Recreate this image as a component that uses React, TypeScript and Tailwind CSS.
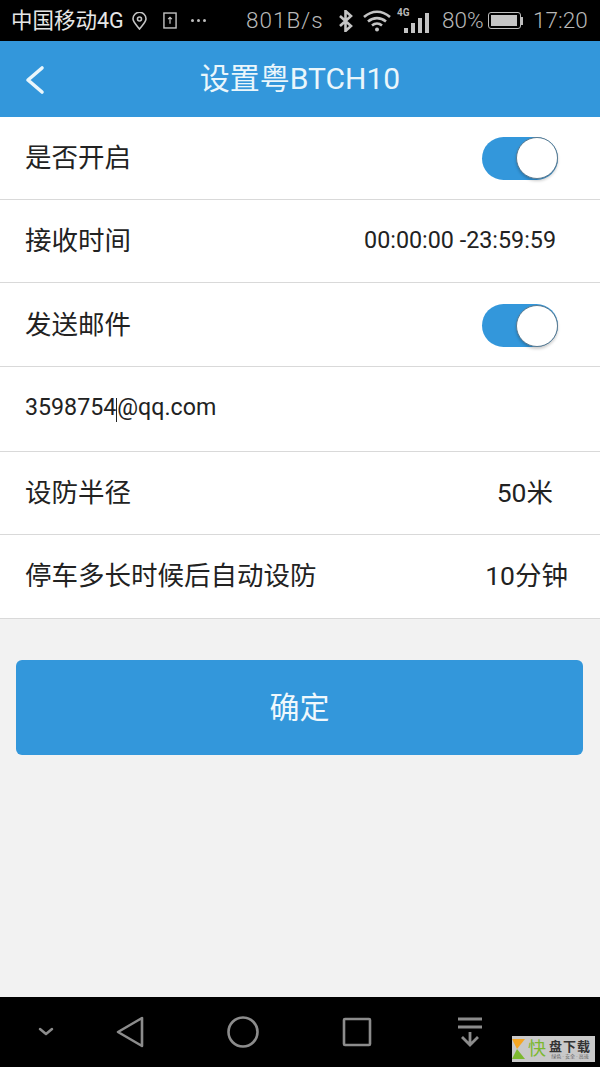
const cjk = "font-['Roboto','Noto_Sans_CJK_SC',sans-serif]";

function Toggle({ className = "" }: { className?: string }) {
  return (
    <div className={`flex h-[43px] w-[76px] items-center justify-end rounded-full bg-[#3397db] ${className}`}>
      <div className="h-[42px] w-[42px] rounded-full border border-[#5a7a90] bg-white shadow-[0_2px_3px_rgba(0,0,0,0.2)]" />
    </div>
  );
}

function Row({ h, children }: { h: string; children: React.ReactNode }) {
  return (
    <div className={`flex items-center justify-between border-b border-[#d9d9d9] bg-white ${h}`}>
      {children}
    </div>
  );
}

function StatusBar() {
  return (
    <div className="flex h-[41px] items-center bg-black text-[#b8b8b8]">
      <span className="ml-[11px] w-[113px] shrink-0 text-[21.5px] leading-none whitespace-nowrap text-[#e6e6e6]">中国移动4G</span>
      {/* location pin */}
      <svg className="ml-[8px] h-[18px] w-[15px] shrink-0" viewBox="0 0 15 18" fill="none" stroke="#c4c4c4" strokeWidth="1.6">
        <path d="M7.5 17C4 12.5 1 10 1 6.800a6.500 6.500 0 0 1 13 0c0 3.200-3 5.700-6.500 10.200z" />
        <circle cx="7.500" cy="7" r="2" />
      </svg>
      {/* upload box */}
      <svg className="ml-[16px] h-[19px] w-[14px] shrink-0" viewBox="0 0 15 19" fill="none" stroke="#c4c4c4">
        <rect x="1" y="1.500" width="13" height="16" strokeWidth="1.500" />
        <path d="M7.500 13V6M5.500 8l2-2 2 2" strokeWidth="1.300" />
      </svg>
      <span className="ml-[14px] flex w-[15px] shrink-0 gap-[3px]">
        <i className="h-[3px] w-[3px] rounded-full bg-[#bdbdbd]" />
        <i className="h-[3px] w-[3px] rounded-full bg-[#bdbdbd]" />
        <i className="h-[3px] w-[3px] rounded-full bg-[#bdbdbd]" />
      </span>
      <span className="ml-[40px] w-[81px] shrink-0 text-[22.5px] leading-none font-light tracking-[1px] whitespace-nowrap">801B/s</span>
      {/* bluetooth */}
      <svg className="ml-[11px] h-[22px] w-[16px] shrink-0" viewBox="0 0 16 22" fill="none" stroke="#c4c4c4" strokeWidth="2.600">
        <path d="M2 6l11 10-5.500 5V1L13 6 2 16" />
      </svg>
      {/* wifi */}
      <svg className="ml-[9px] h-[23px] w-[28px] shrink-0" viewBox="0 0 28 23" fill="none" stroke="#c4c4c4" strokeWidth="2.600">
        <path d="M1 8c8-7 18-7 26 0M5 12.500c5.500-4.500 12.500-4.500 18 0M9 16.500c3-2.500 7-2.500 10 0" />
        <circle cx="14" cy="20.500" r="2" fill="#c4c4c4" stroke="none" />
      </svg>
      {/* signal with 4G */}
      <div className="relative ml-[6px] flex h-[24px] w-[32px] shrink-0 items-end gap-[3px] pl-[7px]">
        <span className="absolute top-[-1px] left-0 text-[10px] leading-none font-bold">4G</span>
        <i className="h-[5px] w-[4px] bg-[#c4c4c4]" />
        <i className="h-[10px] w-[4px] bg-[#c4c4c4]" />
        <i className="h-[15px] w-[4px] bg-[#c4c4c4]" />
        <i className="h-[20px] w-[4px] bg-[#c4c4c4]" />
      </div>
      <span className="ml-[13px] w-[42px] shrink-0 text-[22.5px] leading-none font-light whitespace-nowrap">80%</span>
      {/* battery */}
      <div className="ml-[4px] flex shrink-0 items-center">
        <div className="h-[17px] w-[33px] rounded-[3px] border border-[#bdbdbd] p-[2px]">
          <div className="h-full w-[26px] bg-[#c4c4c4]" />
        </div>
        <i className="h-[8px] w-[2px] bg-[#bdbdbd]" />
      </div>
      <span className="ml-[10px] shrink-0 text-[22.5px] leading-none font-light whitespace-nowrap">17:20</span>
    </div>
  );
}

function NavBar() {
  return (
    <div className="relative flex h-[70px] items-center bg-black">
      <svg className="ml-[38px] h-[10px] w-[16px]" viewBox="0 0 16 10" fill="none" stroke="#8c8c8c" strokeWidth="2.500" strokeLinecap="round" strokeLinejoin="round">
        <path d="M2 2l6 5 6-5" />
      </svg>
      <svg className="ml-[62px] h-[32px] w-[28px]" viewBox="0 0 28 32" fill="none" stroke="#8c8c8c" strokeWidth="2.600" strokeLinejoin="round">
        <path d="M26 2v28L2 16z" />
      </svg>
      <svg className="ml-[83px] h-[32px] w-[32px]" viewBox="0 0 32 32" fill="none" stroke="#8c8c8c" strokeWidth="2.600">
        <circle cx="16" cy="16" r="14.500" />
      </svg>
      <svg className="ml-[83px] h-[30px] w-[30px]" viewBox="0 0 30 30" fill="none" stroke="#8c8c8c" strokeWidth="2.600" strokeLinejoin="round">
        <rect x="2" y="2" width="26" height="26" rx="1" />
      </svg>
      <svg className="ml-[85px] h-[30px] w-[26px]" viewBox="0 0 26 30" fill="none" stroke="#8c8c8c" strokeWidth="2.800">
        <path d="M1 2h24M1 10h24M13 15v13M5 20l8 8 8-8" />
      </svg>
      {/* watermark */}
      <div className="absolute top-[39px] left-[512px] flex h-[26px] w-[83px] items-center bg-[#c9c9c9]">
        <svg className="h-[24px] w-[13px] shrink-0" viewBox="0 0 13 24">
          <path d="M0 2h13L5 12z" fill="#f5a623" />
          <path d="M0 22h13L5 12z" fill="#7cb82f" />
        </svg>
        <span className="ml-[3px] text-[18px] leading-none text-[#7cb82f]">快</span>
        <div className="ml-[3px] flex flex-col items-center leading-none">
          <span className="text-[13px] font-bold tracking-[1px] whitespace-nowrap text-[#333]">盘下载</span>
          <span className="mt-[1px] text-[5px] whitespace-nowrap text-[#666]">绿色 · 安全 · 高速</span>
        </div>
      </div>
    </div>
  );
}

export default function App() {
  return (
    <div className={`flex h-[1067px] w-[600px] flex-col overflow-hidden bg-[#f2f2f2] ${cjk}`}>
      <StatusBar />

      {/* Header */}
      <div className="relative flex h-[76px] items-center justify-center bg-[#3397db] text-[30px] text-[#eaf6fb]">
        <svg className="absolute top-[24px] left-[25px] h-[30px] w-[20px]" viewBox="0 0 20 30" fill="none" stroke="#eaf6fb" strokeWidth="3.600" strokeLinecap="round" strokeLinejoin="round">
          <path d="M17 3L3 15l14 12" />
        </svg>
        <span className="leading-none">设置粤BTCH10</span>
      </div>

      {/* Settings rows */}
      <div className="text-[#222]">
        <Row h="h-[83px] pl-[25px] pr-[42px]">
          <span className="text-[26.5px] leading-none">是否开启</span>
          <Toggle />
        </Row>
        <Row h="h-[83px] pl-[25px] pr-[44px]">
          <span className="text-[26.5px] leading-none">接收时间</span>
          <span className="text-[23.3px] leading-none">00:00:00 -23:59:59</span>
        </Row>
        <Row h="h-[84px] pl-[25px] pr-[42px]">
          <span className="mt-[2px] text-[26.5px] leading-none">发送邮件</span>
          <Toggle className="mt-[2px]" />
        </Row>
        <Row h="h-[85px] px-[25px]">
          <span className="mb-[2px] flex items-center text-[23.2px] leading-none">
            3598754
            <i className="mt-[4px] h-[24px] w-px bg-[#222]" />
            @qq.com
          </span>
        </Row>
        <Row h="h-[83px] pl-[25px] pr-[47px]">
          <span className="text-[26.5px] leading-none">设防半径</span>
          <span className="text-[26.5px] leading-none">50米</span>
        </Row>
        <Row h="h-[84px] pl-[25px] pr-[32px]">
          <span className="text-[26.5px] leading-none">停车多长时候后自动设防</span>
          <span className="text-[26.5px] leading-none">10分钟</span>
        </Row>
      </div>

      <div className="flex-1 px-[16px] pt-[41px]">
        <button className="flex h-[95px] w-[567px] items-center justify-center rounded-[6px] bg-[#3397db] text-[30px] text-[#f0f8fc]">
          确定
        </button>
      </div>

      <NavBar />
    </div>
  );
}
